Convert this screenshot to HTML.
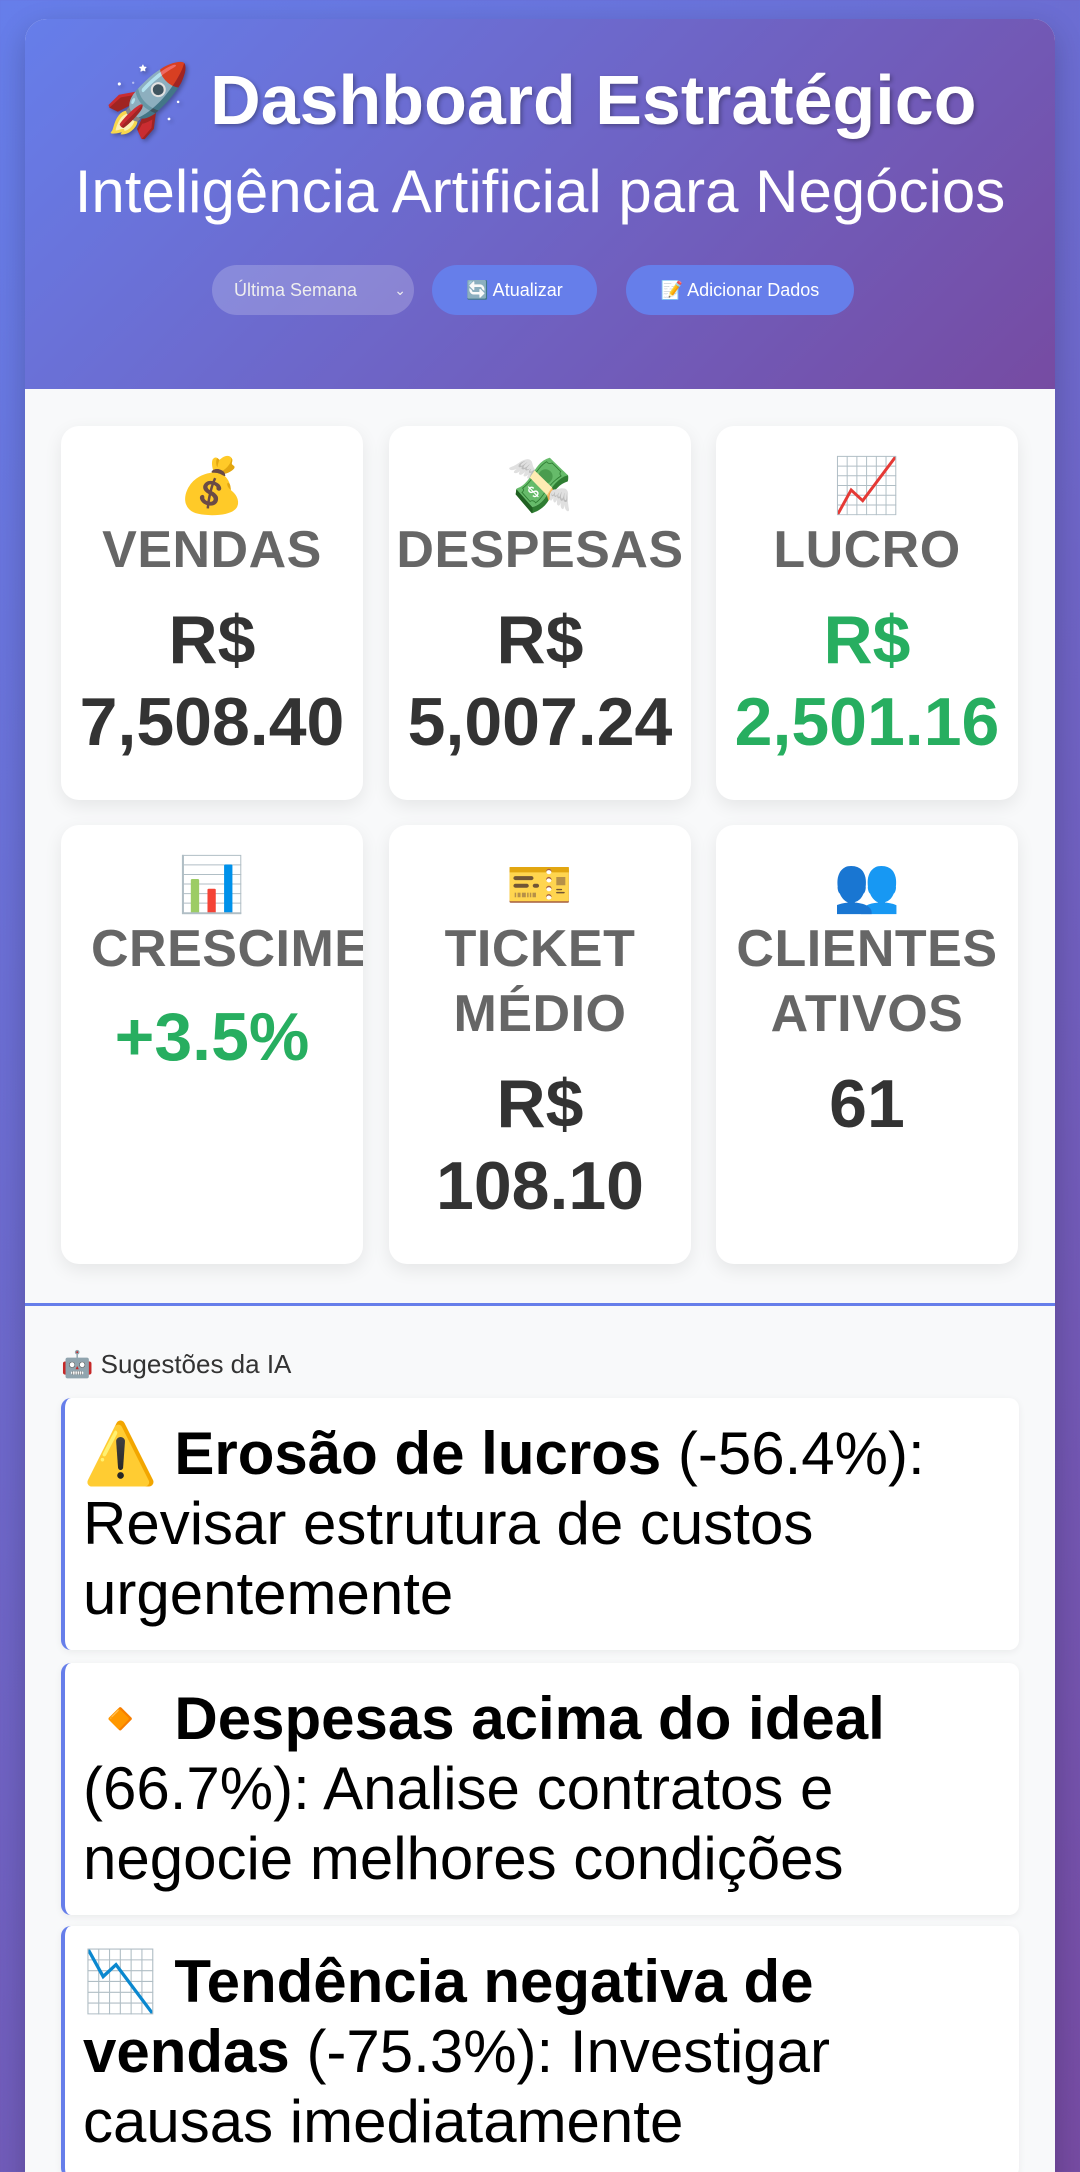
<!DOCTYPE html>
<html><head><meta charset="utf-8"><style>
*{box-sizing:border-box;margin:0;padding:0}
html,body{width:1080px;height:2172px;overflow:hidden}
body{background:linear-gradient(135deg,#667eea 0%,#764ba2 100%);font-family:"Liberation Sans","Noto Sans CJK JP",sans-serif;position:relative}
.wrap{position:absolute;left:25px;top:19px;width:1030px;height:2200px;border-radius:22px;overflow:hidden;background:#f8f9fa;box-shadow:0 10px 30px rgba(0,0,0,.2)}
.head{height:370px;background:linear-gradient(135deg,#667eea 0%,#764ba2 100%);text-align:center;color:#fff;position:relative}
.head h1{position:absolute;left:0;right:0;top:38px;font-size:70px;line-height:86px;font-weight:bold;text-shadow:2px 2px 4px rgba(0,0,0,.3)}
.head .sub{position:absolute;left:-20px;right:-20px;top:137px;font-size:60px;line-height:72px;font-weight:300}
.btn{position:absolute;top:246px;height:50px;border-radius:25px;font-size:18px;line-height:50px;color:#fff;text-align:center}
.stats{position:absolute;top:370px;left:0;width:1030px;height:914px;background:#f8f9fa}
.card{position:absolute;width:302px;background:#fff;border-radius:18px;box-shadow:0 6px 18px rgba(0,0,0,.08);text-align:center;overflow:hidden;padding-top:28px}
.em{font-size:54px;line-height:64px;height:64px}
.lb{font-size:52px;line-height:65px;font-weight:bold;color:#666;white-space:nowrap;letter-spacing:0.5px}
.lb2{white-space:normal}
.v{margin-top:18px;font-size:68px;line-height:82px;font-weight:bold;color:#333}
.g{color:#27ae60}
.line{position:absolute;top:1284px;left:0;width:1030px;height:3px;background:#667eea}
.sg-t{position:absolute;top:1327px;left:36px;font-size:26px;line-height:36px;color:#333}
.sg{position:absolute;left:36px;width:958px;background:#fff;border-left:4px solid #667eea;border-radius:10px;padding:21px 20px 21px 18px;font-size:60px;line-height:70px;color:#000;box-shadow:0 2px 8px rgba(0,0,0,.06)}
</style></head><body>
<div class="wrap">
 <div class="head">
  <h1>🚀 Dashboard Estratégico</h1>
  <div class="sub">Inteligência Artificial para Negócios</div>
  <div class="btn" style="left:187px;width:202px;background:rgba(255,255,255,.2);text-align:left;padding-left:22px;color:#eee">Última Semana<span style="position:absolute;right:8px;font-size:14px">⌄</span></div>
  <div class="btn" style="left:407px;width:165px;background:#667eea">🔄 Atualizar</div>
  <div class="btn" style="left:601px;width:228px;background:#667eea">📝 Adicionar Dados</div>
 </div>
 <div class="stats">
  <div class="card" style="left:36px;top:37px;height:374px"><div class="em">💰</div><div class="lb">VENDAS</div><div class="v" style="margin-top:16px">R$<br>7,508.40</div></div>
  <div class="card" style="left:364px;top:37px;height:374px"><div class="em">💸</div><div class="lb">DESPESAS</div><div class="v" style="margin-top:16px">R$<br>5,007.24</div></div>
  <div class="card" style="left:691px;top:37px;height:374px"><div class="em">📈</div><div class="lb">LUCRO</div><div class="v g" style="margin-top:16px">R$<br>2,501.16</div></div>
  <div class="card" style="left:36px;top:436px;height:439px"><div class="em">📊</div><div class="lb" style="text-align:left;padding-left:30px">CRESCIMENTO</div><div class="v g" style="margin-top:14px">+3.5%</div></div>
  <div class="card" style="left:364px;top:436px;height:439px"><div class="em">🎫</div><div class="lb lb2">TICKET<br>MÉDIO</div><div class="v" style="margin-top:16px">R$<br>108.10</div></div>
  <div class="card" style="left:691px;top:436px;height:439px"><div class="em">👥</div><div class="lb lb2">CLIENTES<br>ATIVOS</div><div class="v" style="margin-top:16px">61</div></div>
 </div>
 <div class="line"></div>
 <div class="sg-t">🤖 Sugestões da IA</div>
 <div class="sg" style="top:1379px">⚠️ <b>Erosão de lucros</b> (-56.4%): Revisar estrutura de custos urgentemente</div>
 <div class="sg" style="top:1644px">🔸 <b>Despesas acima do ideal</b> (66.7%): Analise contratos e negocie melhores condições</div>
 <div class="sg" style="top:1907px">📉 <b>Tendência negativa de vendas</b> (-75.3%): Investigar causas imediatamente</div>
</div>
</body></html>
